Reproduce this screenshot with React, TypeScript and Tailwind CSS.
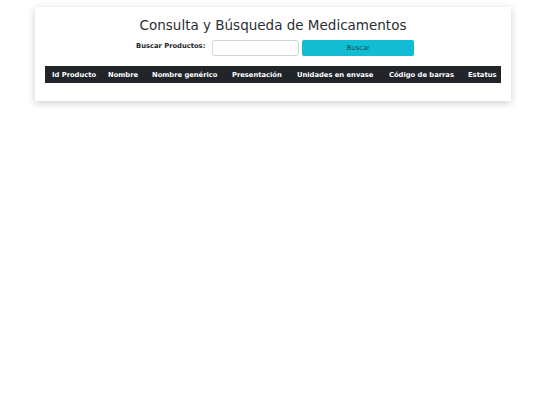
import React from "react";

const columns = [
  { label: "Id Producto", width: "w-[56px]" },
  { label: "Nombre", width: "w-[44px]" },
  { label: "Nombre genérico", width: "w-[80px]" },
  { label: "Presentación", width: "w-[65px]" },
  { label: "Unidades en envase", width: "w-[92px]" },
  { label: "Código de barras", width: "w-[79px]" },
  { label: "Estatus", width: "w-[40px]" },
];

export default function App() {
  return (
    <div className="min-h-[405px] bg-white pt-[7px] font-['DejaVu_Sans',sans-serif] text-[#212529]">
      {/* Card */}
      <div className="ml-[35px] w-[476px] bg-white px-[10px] pt-[10px] pb-[18px] shadow-[0_2px_8px_rgba(0,0,0,0.2)]">
        <h1 className="text-center text-[13.5px] leading-[16px] font-normal text-[#2b2f33]">
          Consulta y Búsqueda de Medicamentos
        </h1>

        {/* Search row */}
        <div className="mt-[7px] flex items-start">
          <label className="ml-[91px] pt-[1px] text-[6.75px] leading-[10px] font-bold">
            Buscar Productos:
          </label>
          <input
            type="text"
            className="ml-[7px] h-[16px] w-[87px] rounded-[3px] border border-[#ced4da] bg-white px-[4px] text-[6.75px] outline-none"
          />
          <button className="ml-[3px] h-[16px] w-[112px] rounded-[2px] bg-[#12bdd4] text-[6.75px] leading-[16px] text-[#1d4a55]">
            Buscar
          </button>
        </div>

        {/* Table */}
        <table className="mt-[10px] w-[456px] table-fixed border-collapse">
          <thead>
            <tr className="bg-[#212529] text-white">
              {columns.map((c) => (
                <th
                  key={c.label}
                  className={`${c.width} h-[17px] whitespace-nowrap pl-[7px] text-left align-middle text-[6.75px] leading-[10px] font-bold`}
                >
                  {c.label}
                </th>
              ))}
            </tr>
          </thead>
          <tbody />
        </table>
      </div>
    </div>
  );
}
